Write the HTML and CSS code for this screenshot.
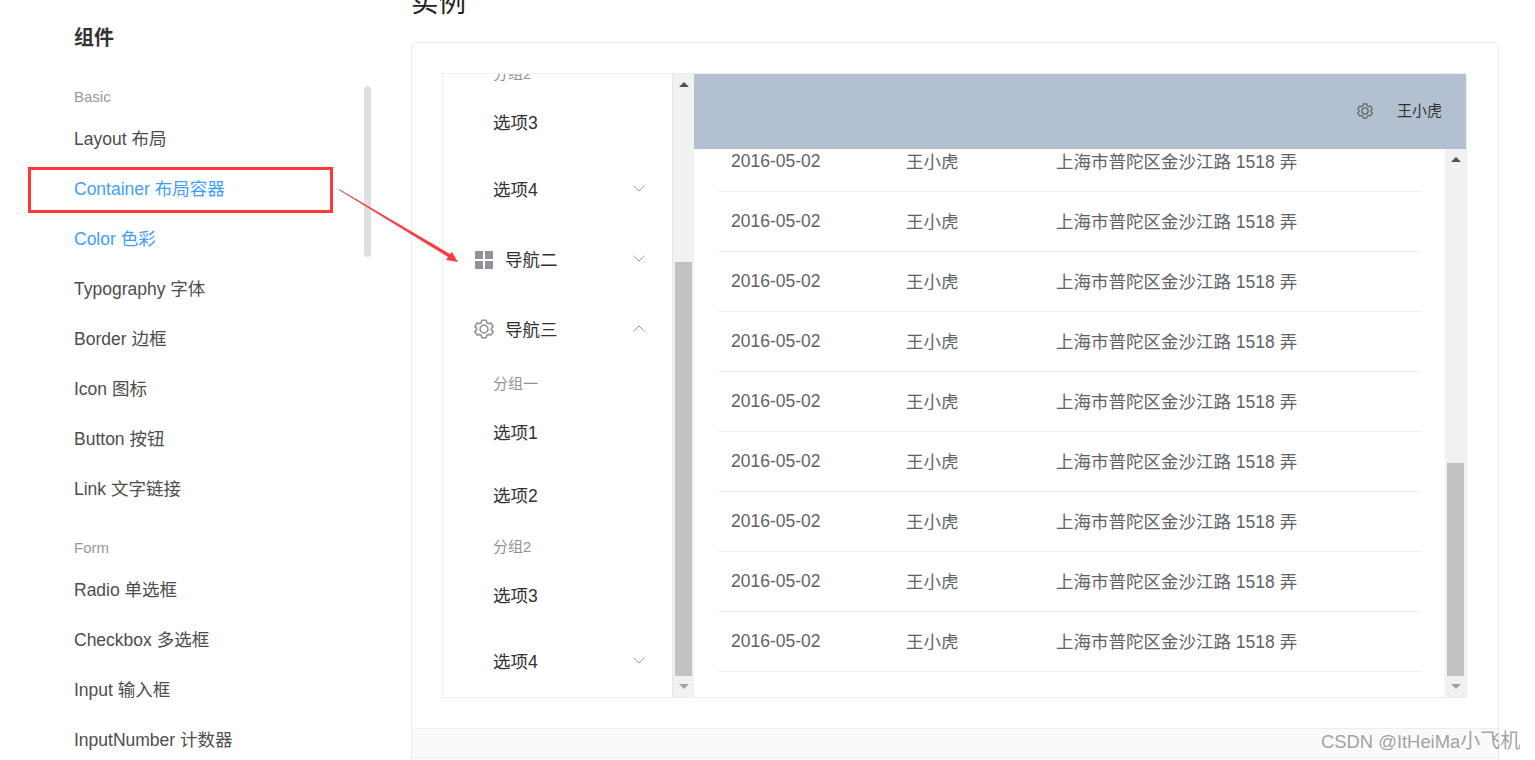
FILE: index.html
```html
<!DOCTYPE html>
<html lang="en">
<head>
    <meta charset="UTF-8">
    <meta name="viewport" content="width=device-width, initial-scale=1.0">
    <title>Container 布局容器</title>
    <link rel="stylesheet" href="styles.css">
</head>
<body>
    <svg width="0" height="0" class="defs">
        <symbol id="gear" viewBox="0 0 20 20">
            <path d="M7.9 1.2h4.2l.8 2.5 1.5.9 2.6-.6 2.1 3.6-1.8 1.9v1l1.8 1.9-2.1 3.6-2.6-.6-1.5.9-.8 2.5H7.9l-.8-2.5-1.5-.9-2.6.6L.9 12.4l1.8-1.9v-1L.9 7.6 3 4l2.6.6 1.5-.9z" fill="none" stroke="currentColor" stroke-width="1.6" stroke-linejoin="round"/>
            <circle cx="10" cy="10" r="3.9" fill="none" stroke="currentColor" stroke-width="1.6"/>
        </symbol>
        <symbol id="chevron" viewBox="0 0 12 7">
            <path d="M.5.8 6 6 11.5.8" fill="none" stroke="currentColor" stroke-width="1"/>
        </symbol>
    </svg>

    <div class="page">
        <div class="side">
            <div class="side-nav">
                <h2 class="side-title">组件</h2>
                <div class="side-label">Basic</div>
                <a class="side-link">Layout 布局</a>
                <a class="side-link active">Container 布局容器</a>
                <a class="side-link active">Color 色彩</a>
                <a class="side-link">Typography 字体</a>
                <a class="side-link">Border 边框</a>
                <a class="side-link">Icon 图标</a>
                <a class="side-link">Button 按钮</a>
                <a class="side-link">Link 文字链接</a>
                <div class="side-label second">Form</div>
                <a class="side-link">Radio 单选框</a>
                <a class="side-link">Checkbox 多选框</a>
                <a class="side-link">Input 输入框</a>
                <a class="side-link">InputNumber 计数器</a>
            </div>
            <div class="side-thumb"></div>
        </div>

        <div class="content">
            <h3 class="heading">实例</h3>
            <div class="card">
                <div class="demo">
                    <div class="demo-inner">
                        <div class="menu-pane">
                            <div class="menu">
                                <div class="menu-group">分组2</div>
                                <div class="menu-item">选项3</div>
                                <div class="menu-sub">选项4<svg class="chevron"><use href="#chevron"/></svg></div>
                                <div class="menu-nav">
                                    <span class="grid-icon"><i></i><i></i><i></i><i></i></span>导航二
                                    <svg class="chevron"><use href="#chevron"/></svg>
                                </div>
                                <div class="menu-nav">
                                    <svg class="gear-icon"><use href="#gear"/></svg>导航三
                                    <svg class="chevron up"><use href="#chevron"/></svg>
                                </div>
                                <div class="menu-group">分组一</div>
                                <div class="menu-item">选项1</div>
                                <div class="menu-item">选项2</div>
                                <div class="menu-group">分组2</div>
                                <div class="menu-item">选项3</div>
                                <div class="menu-sub last">选项4<svg class="chevron"><use href="#chevron"/></svg></div>
                            </div>
                        </div>
                        <div class="scrollbar">
                            <div class="sb-btn"><span class="arrow-up"></span></div>
                            <div class="sb-space"></div>
                            <div class="sb-thumb menu-thumb"></div>
                            <div class="sb-btn"><span class="arrow-down"></span></div>
                        </div>
                        <div class="right-pane">
                            <div class="top-bar">
                                <svg class="top-gear"><use href="#gear"/></svg>
                                <span class="user">王小虎</span>
                            </div>
                            <div class="body-row">
                                <div class="table-wrap">
                                    <table class="table" id="table"></table>
                                </div>
                                <div class="scrollbar">
                                    <div class="sb-btn"><span class="arrow-up"></span></div>
                                    <div class="sb-space"></div>
                                    <div class="sb-thumb table-thumb"></div>
                                    <div class="sb-btn"><span class="arrow-down"></span></div>
                                </div>
                            </div>
                        </div>
                    </div>
                </div>
                <div class="card-footer"></div>
            </div>
        </div>
    </div>

    <div class="red-box"></div>
    <svg class="red-arrow" width="130" height="85" viewBox="0 0 130 85">
        <polygon points="0,0 111,65 113,63 119,73 107,71 109,68 0,1" fill="#f44040"/>
    </svg>
    <div class="watermark">CSDN @ItHeiMa<span class="watermark-cjk">小飞机</span></div>

    <script>
        const table = document.getElementById('table');
        for (let i = 0; i < 9; i++) {
            const tr = document.createElement('tr');
            ['2016-05-02', '王小虎', '上海市普陀区金沙江路 1518 弄'].forEach(text => {
                const td = document.createElement('td');
                td.textContent = text;
                tr.appendChild(td);
            });
            table.appendChild(tr);
        }
    </script>
</body>
</html>
```

FILE: styles.css
```css
html, body {
    height: 100%;
}

body {
    margin: 0;
    height: 760px;
    overflow: hidden;
    background: #fff;
    font-family: "Liberation Sans", "Noto Sans CJK SC", sans-serif;
}

.defs {
    display: block;
    height: 0;
}

.page {
    display: flex;
    height: 760px;
    overflow: hidden;
}

/* left docs nav */
.side {
    display: flex;
    flex: 0 0 411px;
}

.side-nav {
    width: 290px;
    padding-left: 74px;
}

.side-title {
    margin: 0;
    padding-top: 25px;
    height: 39px;
    line-height: 27px;
    font-size: 20px;
    font-weight: 700;
    color: #333;
}

.side-label {
    height: 32px;
    margin-top: 18px;
    line-height: 30px;
    font-size: 15px;
    color: #999;
}

.side-label.second {
    margin-top: 18px;
    height: 33px;
    line-height: 32px;
}

.side-link {
    display: block;
    height: 50px;
    line-height: 50px;
    font-size: 17.5px;
    color: #4d4d4d;
    white-space: nowrap;
}

.side-link.active {
    color: #409eff;
}

.side-thumb {
    width: 7px;
    height: 171px;
    margin-top: 86px;
    border-radius: 4px;
    background: #dddfe1;
}

/* right content */
.content {
    flex: 0 0 1088px;
}

.heading {
    margin: -12px 0 24px;
    height: 30px;
    line-height: 30px;
    font-size: 27.5px;
    font-weight: 400;
    color: #222;
}

.card {
    height: 800px;
    border: 1px solid #ebebeb;
    border-radius: 4px;
}

.demo {
    padding: 30px 31px 30px 30px;
    height: 625px;
}

.demo-inner {
    display: flex;
    height: 623px;
    border: 1px solid #eee;
}

.menu-pane {
    width: 229px;
    border-right: 1px solid #e6e6e6;
    overflow: hidden;
}

.menu {
    margin-top: -20px;
    font-size: 17.5px;
    color: #303133;
}

.menu-group {
    height: 35px;
    margin-top: 2px;
    padding-left: 50px;
    line-height: 35px;
    font-size: 15px;
    color: #909399;
}

.menu-item {
    height: 63px;
    padding-left: 50px;
    line-height: 65px;
}

.menu-sub,
.menu-nav {
    display: flex;
    align-items: center;
    box-sizing: border-box;
    height: 70px;
    padding-bottom: 2px;
}

.menu-sub {
    padding-left: 50px;
}

.menu-sub.last {
    margin-top: -1px;
}

.menu-nav {
    padding-left: 31px;
}

.chevron {
    width: 12px;
    height: 7px;
    margin-left: auto;
    margin-right: 27px;
    margin-top: 1px;
    color: #909399;
}

.chevron.up {
    transform: rotate(180deg);
}

.grid-icon {
    display: grid;
    grid-template-columns: 8px 8px;
    grid-template-rows: 8px 8px;
    gap: 2px;
    margin: 3px 12px 0 1px;
}

.grid-icon i {
    background: #909399;
}

.gear-icon {
    width: 20px;
    height: 20px;
    margin: 2px 11px 0 0;
    color: #909399;
}

/* fake classic scrollbars */
.scrollbar {
    display: flex;
    flex-direction: column;
    flex: 0 0 21px;
    background: #f1f1f1;
}

.sb-btn {
    display: flex;
    align-items: center;
    justify-content: center;
    height: 21px;
}

.sb-space {
    flex: 1;
}

.sb-thumb {
    margin: 0 2px;
    background: #c1c1c1;
}

.menu-thumb {
    height: 414px;
}

.table-thumb {
    height: 213px;
}

.arrow-up {
    width: 0;
    height: 0;
    border-left: 5px solid transparent;
    border-right: 5px solid transparent;
    border-bottom: 5px solid #505050;
}

.arrow-down {
    width: 0;
    height: 0;
    border-left: 5px solid transparent;
    border-right: 5px solid transparent;
    border-top: 5px solid #a3a3a3;
}

.right-pane {
    display: flex;
    flex-direction: column;
    flex: 1;
    min-width: 0;
}

.top-bar {
    display: flex;
    align-items: center;
    justify-content: flex-end;
    box-sizing: border-box;
    flex: 0 0 75px;
    padding: 0 24px 2px 0;
    background: #b3c0d1;
    color: #333;
}

.top-gear {
    width: 16px;
    height: 16px;
    margin-right: 24px;
    color: #666;
}

.user {
    padding-bottom: 2px;
    font-size: 15px;
    color: #303133;
}

.body-row {
    display: flex;
    flex: 1;
    min-height: 0;
}

.table-wrap {
    flex: 1;
    padding: 0 25px;
    overflow: hidden;
}

.table {
    width: 701px;
    margin-top: -17px;
    border-collapse: collapse;
    table-layout: fixed;
    font-size: 17.5px;
    color: #606266;
}

.table td {
    height: 56px;
    padding: 0 0 3px 12px;
    border-bottom: 1px solid #ebeef5;
    white-space: nowrap;
}

.table td:nth-child(1) {
    width: 163px;
    height: 59px;
    padding-bottom: 0;
}

.table td:nth-child(2) {
    width: 138px;
}

.card-footer {
    height: 28px;
    border-top: 1px solid #eaeefb;
    border-bottom: 1px solid #eaeefb;
    background: #fafafa;
}

/* annotations on top of the screenshot */
.red-box {
    position: absolute;
    left: 28px;
    top: 167px;
    width: 299px;
    height: 40px;
    border: 3px solid #ff3838;
}

.red-arrow {
    position: absolute;
    left: 339px;
    top: 189px;
}

.watermark {
    position: absolute;
    left: 1321px;
    top: 729px;
    font-size: 18.4px;
    line-height: 24px;
    color: rgba(110, 110, 110, 0.65);
    white-space: nowrap;
}

.watermark-cjk {
    font-size: 20px;
}
```
